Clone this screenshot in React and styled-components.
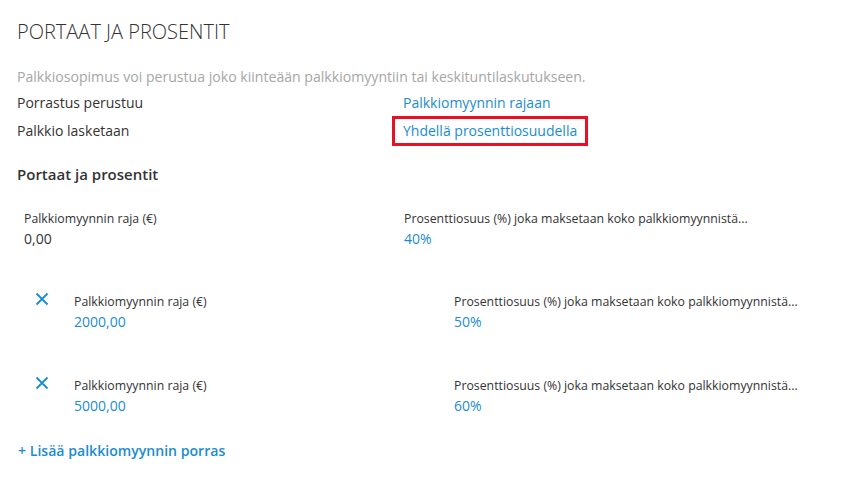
import React from "react";
import styled, { createGlobalStyle } from "styled-components";

const Global = createGlobalStyle`
  html, body { margin: 0; padding: 0; background: #fff; }
  body { font-family: "Open Sans", "Noto Sans", sans-serif; color: #333; }
`;

const Page = styled.div`
  width: 849px;
  height: 487px;
  box-sizing: border-box;
  padding: 20px 17px 0 17px;
  overflow: hidden;
`;

const Title = styled.h1`
  margin: 0;
  font-size: 20px;
  font-weight: 300;
  line-height: 24px;
  color: #333;
`;

const Description = styled.p`
  margin: 23px 0 3px 0;
  font-size: 14.1px;
  line-height: 20px;
  color: #a6a6a6;
`;

const InfoRow = styled.div`
  display: grid;
  grid-template-columns: 386px auto;
  align-items: center;
  font-size: 14px;
  line-height: 20px;
  height: ${(p) => p.$h || 26}px;
`;

const InfoLabel = styled.span`
  color: #333;
`;

const LinkText = styled.a`
  color: #1b8ccf;
  text-decoration: none;
  justify-self: start;
  ${(p) =>
    p.$highlight &&
    `
    margin-left: -11px;
    padding: 2px 8px 2px 8px;
    border: 3px solid #e81123;
  `}
`;

const SectionTitle = styled.h2`
  margin: 18px 0 0 0;
  font-size: 15px;
  font-weight: 600;
  line-height: 20px;
  color: #333;
`;

const Step = styled.div`
  display: grid;
  grid-template-columns: ${(p) => (p.$removable ? "39px 380px auto" : "380px auto")};
  margin-top: ${(p) => p.$mt}px;
  padding-left: ${(p) => (p.$removable ? 18 : 7)}px;
`;

const RemoveButton = styled.button`
  border: 0;
  background: none;
  padding: 0;
  margin: -1px 0 0 0;
  width: 14px;
  height: 14px;
  display: flex;
  cursor: pointer;
`;

const Field = styled.div`
  display: flex;
  flex-direction: column;
`;

const FieldLabel = styled.span`
  font-size: 12.3px;
  line-height: 18px;
  color: #333;
`;

const FieldValue = styled.span`
  font-size: 14px;
  line-height: 22px;
  color: ${(p) => (p.$link ? "#1b8ccf" : "#333")};
`;

const AddLink = styled.a`
  display: block;
  margin: 24px 0 0 1px;
  font-size: 14.1px;
  font-weight: 600;
  color: #1b8ccf;
  text-decoration: none;
  line-height: 20px;
`;

const CloseIcon = () => (
  <svg width="14" height="14" viewBox="0 0 14 14">
    <path d="M1.5 1.5 L12.5 12.5 M12.5 1.5 L1.5 12.5" stroke="#1b8ccf" strokeWidth="1.8" fill="none" />
  </svg>
);

const steps = [
  { limit: "2000,00", pct: "50%", mt: 43 },
  { limit: "5000,00", pct: "60%", mt: 44 },
];

export default function App() {
  return (
    <Page>
      <Global />
      <Title>PORTAAT JA PROSENTIT</Title>
      <Description>
        Palkkiosopimus voi perustua joko kiinteään palkkiomyyntiin tai keskituntilaskutukseen.
      </Description>
      <InfoRow>
        <InfoLabel>Porrastus perustuu</InfoLabel>
        <LinkText href="#">Palkkiomyynnin rajaan</LinkText>
      </InfoRow>
      <InfoRow $h={30}>
        <InfoLabel>Palkkio lasketaan</InfoLabel>
        <LinkText href="#" $highlight>
          Yhdellä prosenttiosuudella
        </LinkText>
      </InfoRow>
      <SectionTitle>Portaat ja prosentit</SectionTitle>
      <Step $mt={26}>
        <Field>
          <FieldLabel>Palkkiomyynnin raja (€)</FieldLabel>
          <FieldValue>0,00</FieldValue>
        </Field>
        <Field>
          <FieldLabel>Prosenttiosuus (%) joka maksetaan koko palkkiomyynnistä...</FieldLabel>
          <FieldValue $link>40%</FieldValue>
        </Field>
      </Step>
      {steps.map((s) => (
        <Step key={s.limit} $removable $mt={s.mt}>
          <RemoveButton aria-label="Poista">
            <CloseIcon />
          </RemoveButton>
          <Field>
            <FieldLabel>Palkkiomyynnin raja (€)</FieldLabel>
            <FieldValue $link>{s.limit}</FieldValue>
          </Field>
          <Field>
            <FieldLabel>Prosenttiosuus (%) joka maksetaan koko palkkiomyynnistä...</FieldLabel>
            <FieldValue $link>{s.pct}</FieldValue>
          </Field>
        </Step>
      ))}
      <AddLink href="#">+ Lisää palkkiomyynnin porras</AddLink>
    </Page>
  );
}
